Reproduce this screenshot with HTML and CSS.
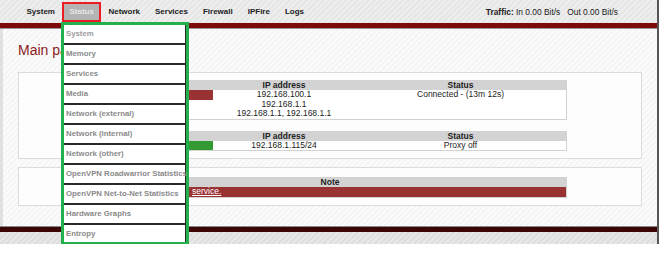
FILE: index.html
```html
<!DOCTYPE html>
<html lang="en">
<head>
    <meta charset="UTF-8">
    <meta name="viewport" content="width=device-width, initial-scale=1.0">
    <title>IPFire - Main page</title>
    <link rel="stylesheet" href="styles.css">
</head>
<body>
    <div class="page">
        <div class="topbar">
            <nav class="menu">
                <a href="#">System</a>
                <a href="#" class="active">Status</a>
                <a href="#">Network</a>
                <a href="#">Services</a>
                <a href="#">Firewall</a>
                <a href="#">IPFire</a>
                <a href="#">Logs</a>
            </nav>
            <div class="traffic"><b>Traffic:</b> In 0.00 Bit/s&nbsp;&nbsp; Out 0.00 Bit/s</div>
        </div>
        <div class="redbar"></div>

        <div class="content">
            <h1 class="title">Main page</h1>
            <div class="box">
                <table class="net">
                    <tr><th class="col-if"></th><th class="col-ip">IP address</th><th>Status</th></tr>
                    <tr><td class="if-red"></td><td>192.168.100.1</td><td>Connected - (13m 12s)</td></tr>
                    <tr><td></td><td>192.168.1.1</td><td></td></tr>
                    <tr><td></td><td>192.168.1.1, 192.168.1.1</td><td></td></tr>
                </table>
                <table class="net second">
                    <tr><th class="col-if"></th><th class="col-ip">IP address</th><th>Status</th></tr>
                    <tr><td class="if-green"></td><td>192.168.1.115/24</td><td>Proxy off</td></tr>
                </table>
            </div>
            <div class="box notes">
                <table class="net">
                    <tr><th>Note</th></tr>
                    <tr><td class="warn"><a href="#">service.</a></td></tr>
                </table>
            </div>
        </div>

        <div class="footbar"></div>
        <div class="footer"></div>

        <ul class="dropdown">
            <li class="first">System</li>
            <li>Memory</li>
            <li>Services</li>
            <li>Media</li>
            <li>Network (external)</li>
            <li>Network (internal)</li>
            <li>Network (other)</li>
            <li>OpenVPN Roadwarrior Statistics</li>
            <li>OpenVPN Net-to-Net Statistics</li>
            <li>Hardware Graphs</li>
            <li class="last">Entropy</li>
        </ul>
    </div>
</body>
</html>
```

FILE: styles.css
```css
body {
    margin: 0;
    background-color: #fff;
    font-family: "Liberation Sans", Arial, sans-serif;
}
.page {
    position: relative;
    width: 657px;
    border-right: 2px solid #555;
}
.topbar {
    height: 23px;
    display: flex;
    align-items: center;
    justify-content: space-between;
    background: repeating-linear-gradient(135deg, #e6e6e6 0 2px, #eeeeee 2px 4px);
}
.menu {
    display: flex;
    align-items: center;
    padding-left: 19px;
}
.menu a {
    font-size: 8px;
    font-weight: bold;
    color: #222;
    text-decoration: none;
    padding: 0 7.5px;
    line-height: 16px;
}
.menu a.active {
    background-color: #b4b4b4;
    color: #e6e6e6;
    border: 2px solid #ed1c24;
    padding: 0 5px;
}
.traffic {
    font-size: 8.4px;
    color: #222;
    padding-right: 39px;
}
.redbar {
    height: 5px;
    background-color: #7d0a0a;
    border-bottom: 1px solid #999;
}
.content {
    height: 184px;
    padding: 13px 15px 0 15px;
    border-left: 3px solid #e0e0e0;
    background: repeating-linear-gradient(135deg, #f5f5f5 0 2px, #fbfbfb 2px 4px);
}
.title {
    margin: 0;
    font-size: 14px;
    font-weight: normal;
    line-height: 16px;
    color: #8b1a1a;
}
.box {
    margin-top: 14px;
    width: 600px;
    padding: 7px 11px;
    background-color: #fdfdfd;
    border: 1px solid #dcdcdc;
}
.box.notes {
    margin-top: 8px;
    padding: 9px 11px 7px 11px;
}
.net {
    width: 474px;
    margin: 0 auto;
    border-collapse: collapse;
    border: 1px solid #d2d2d2;
    font-size: 8.5px;
    color: #222;
    background-color: #fff;
}
.net.second {
    margin-top: 11px;
}
.net th {
    background-color: #d3d3d3;
    height: 9px;
    line-height: 9px;
    padding: 0;
    font-weight: bold;
}
.net td {
    height: 9.6px;
    line-height: 9.6px;
    padding: 0;
    text-align: center;
}
.col-if {
    width: 119px;
}
.col-ip {
    width: 142px;
}
.if-red {
    background-color: #993333;
}
.if-green {
    background-color: #339933;
}
.net td.warn {
    background-color: #993333;
    text-align: left;
    padding-left: 98px;
}
.warn a {
    color: #fff;
}
.footbar {
    height: 5px;
    background-color: #3d0606;
    border-top: 1px solid #888;
}
.footer {
    height: 12px;
    background: repeating-linear-gradient(135deg, #dedede 0 2px, #e8e8e8 2px 4px);
}
.dropdown {
    position: absolute;
    left: 61px;
    top: 22px;
    width: 122px;
    margin: 0;
    padding: 0;
    list-style: none;
    border: 3px solid #22b14c;
    background-color: #fff;
}
.dropdown li {
    height: 18px;
    line-height: 18px;
    padding-left: 2px;
    font-size: 7.8px;
    font-weight: bold;
    color: #8a8a8a;
    white-space: nowrap;
    border-bottom: 2px solid #2a2a2a;
    border-right: 1px solid #2a2a2a;
}
.dropdown li.first {
    color: #9c9c9c;
}
.dropdown li.last {
    height: 17px;
    line-height: 17px;
    border-bottom: none;
}
```
